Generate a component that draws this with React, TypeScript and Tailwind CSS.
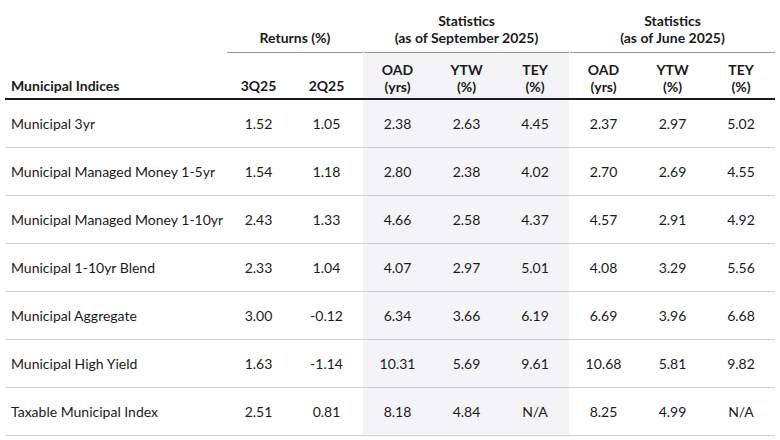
const rows = [
  ["Municipal 3yr", "1.52", "1.05", "2.38", "2.63", "4.45", "2.37", "2.97", "5.02"],
  ["Municipal Managed Money 1-5yr", "1.54", "1.18", "2.80", "2.38", "4.02", "2.70", "2.69", "4.55"],
  ["Municipal Managed Money 1-10yr", "2.43", "1.33", "4.66", "2.58", "4.37", "4.57", "2.91", "4.92"],
  ["Municipal 1-10yr Blend", "2.33", "1.04", "4.07", "2.97", "5.01", "4.08", "3.29", "5.56"],
  ["Municipal Aggregate", "3.00", "-0.12", "6.34", "3.66", "6.19", "6.69", "3.96", "6.68"],
  ["Municipal High Yield", "1.63", "-1.14", "10.31", "5.69", "9.61", "10.68", "5.81", "9.82"],
  ["Taxable Municipal Index", "2.51", "0.81", "8.18", "4.84", "N/A", "8.25", "4.99", "N/A"],
];

const grid = "grid grid-cols-[222px_63px_73px_69px_69px_68px_69px_69px_68px]";
const shade = (i: number) => (i >= 3 && i <= 5 ? "bg-[#f4f4f6]" : "");

const sub = [
  ["OAD", "(yrs)"],
  ["YTW", "(%)"],
  ["TEY", "(%)"],
  ["OAD", "(yrs)"],
  ["YTW", "(%)"],
  ["TEY", "(%)"],
];

export default function App() {
  return (
    <div className="w-[780px] h-[440px] bg-white px-[5px] text-[#1a1a1a] text-[14px] leading-[17px]" style={{ fontFamily: "Lato, 'Open Sans', sans-serif" }}>
      {/* group header */}
      <div className={grid}>
        <div />
        <div className="col-span-2 flex items-end justify-center pt-3 pb-[6px] font-bold border-b border-[#9a9a9a]">
          Returns (%)
        </div>
        <div className="col-span-3 ml-[1px] flex flex-col items-center pt-3 pb-[6px] font-bold border-b border-[#9a9a9a]">
          <span>Statistics</span>
          <span>(as of September 2025)</span>
        </div>
        <div className="col-span-3 ml-[1px] flex flex-col items-center pt-3 pb-[6px] font-bold border-b border-[#9a9a9a]">
          <span>Statistics</span>
          <span>(as of June 2025)</span>
        </div>
      </div>
      {/* column header */}
      <div className={`${grid} font-bold border-b-2 border-[#1a1a1a]`}>
        <div className="flex items-end pl-[6px] pt-2 pb-[4px]">Municipal Indices</div>
        <div className="flex items-end justify-center pt-2 pb-[4px]">3Q25</div>
        <div className="flex items-end justify-center pt-2 pb-[4px]">2Q25</div>
        {sub.map(([a, b], i) => (
          <div key={i} className={`flex flex-col items-center pt-2 pb-[3px] ${shade(i + 3)}`}>
            <span>{a}</span>
            <span>{b}</span>
          </div>
        ))}
      </div>
      {rows.map((r) => (
        <div key={r[0]} className={`${grid} border-b border-[#cfcfcf]`}>
          {r.map((c, i) => (
            <div
              key={i}
              className={`h-[47px] flex items-center ${i === 0 ? "pl-[6px]" : "justify-center"} ${shade(i)}`}
            >
              {c}
            </div>
          ))}
        </div>
      ))}
    </div>
  );
}
